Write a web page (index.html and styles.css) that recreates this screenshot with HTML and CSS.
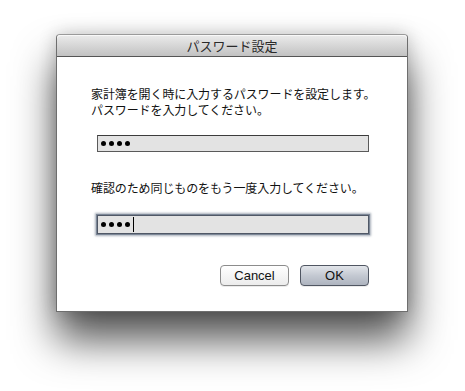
FILE: index.html
```html
<!DOCTYPE html>
<html lang="ja">
<head>
<meta charset="utf-8">
<title>パスワード設定</title>
<link rel="stylesheet" href="styles.css">
</head>
<body>
<div class="window">
  <div class="titlebar">パスワード設定</div>
  <div class="content">
    <p class="msg">家計簿を開く時に入力するパスワードを設定します。<br>パスワードを入力してください。</p>
    <div class="field"><span class="dot"></span><span class="dot"></span><span class="dot"></span><span class="dot"></span></div>
    <p class="msg msg2">確認のため同じものをもう一度入力してください。</p>
    <div class="field focus"><span class="dot"></span><span class="dot"></span><span class="dot"></span><span class="dot"></span><span class="caret"></span></div>
    <div class="buttons">
      <button class="btn">Cancel</button>
      <button class="btn default">OK</button>
    </div>
  </div>
</div>
</body>
</html>
```
FILE: styles.css
```css
html, body {
  margin: 0;
  padding: 0;
  background: #ffffff;
}
html {
  height: 100%;
}
body {
  min-height: 100%;
  box-sizing: border-box;
  padding: 34px 0 79px 56px;
  font-family: "Noto Sans CJK JP", "Noto Sans", sans-serif;
}
.window {
  width: 350px;
  border: 1px solid #6e6e6e;
  border-top-color: #9a9a9a;
  border-radius: 4px 4px 0 0;
  background: #ffffff;
  box-shadow: 0 28px 42px rgba(0, 0, 0, 0.68), 0 0 18px rgba(0, 0, 0, 0.2);
}
.titlebar {
  height: 21px;
  line-height: 21px;
  text-align: center;
  font-size: 13px;
  color: #2a2a2a;
  background: linear-gradient(#ebebeb, #c2c2c2);
  border-bottom: 1px solid #555555;
  border-radius: 4px 4px 0 0;
  box-shadow: inset 0 1px 0 #f8f8f8;
}
.content {
  padding: 29px 0 25px 34px;
}
.msg {
  margin: 0;
  font-size: 12px;
  line-height: 16px;
  color: #111111;
  letter-spacing: -0.1px;
}
.msg2 {
  margin-top: 28px;
}
.field {
  margin: 17px 0 0 6px;
  width: 267px;
  height: 15px;
  background: #e3e3e3;
  border: 1px solid #5a5a5a;
  border-top-color: #3c3c3c;
  display: flex;
  align-items: center;
  gap: 3px;
  padding-left: 3px;
  box-sizing: content-box;
}
.field.focus {
  margin-top: 19px;
  height: 17px;
  border-color: #505866;
  box-shadow: 0 0 0 1px #7c8797, 0 0 2px 2px rgba(96, 110, 130, 0.55);
}
.dot {
  width: 5px;
  height: 5px;
  border-radius: 50%;
  background: #000000;
}
.caret {
  width: 1px;
  height: 15px;
  background: #000000;
}
.buttons {
  display: flex;
  justify-content: flex-end;
  gap: 11px;
  margin: 31px 38px 0 0;
}
.btn {
  width: 69px;
  height: 21px;
  padding: 0;
  font-family: "Liberation Sans", "DejaVu Sans", sans-serif;
  font-size: 13px;
  color: #111111;
  border: 1px solid #8c8c8c;
  border-radius: 4px;
  background: linear-gradient(#ffffff, #ececec);
  box-shadow: 0 1px 0 rgba(0, 0, 0, 0.08);
}
.btn.default {
  border-color: #505662;
  background: linear-gradient(#e2e5ea, #c4c9d2 50%, #aeb4bf);
}
```
